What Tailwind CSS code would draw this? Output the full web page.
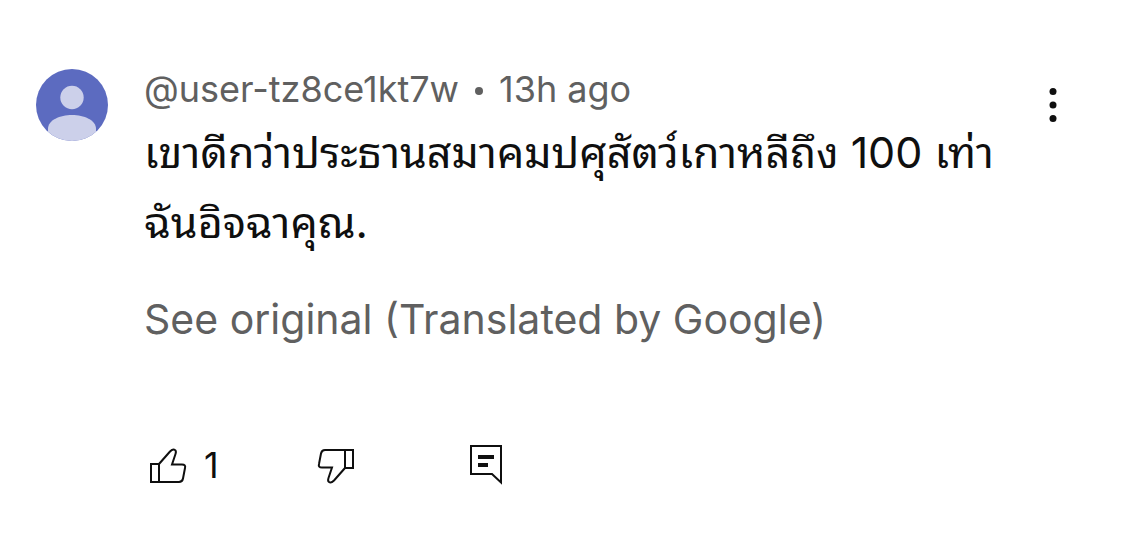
<!DOCTYPE html>
<html lang="th">

<head>
    <meta charset="UTF-8">
    <meta name="viewport" content="width=device-width, initial-scale=1.0">
    <title>Comment</title>
    <script src="https://cdn.jsdelivr.net/npm/@tailwindcss/browser@4"></script>
</head>

<body class="bg-white font-[Inter,'Noto_Sans_Thai_Looped',Thonburi,Loma,Garuda,Waree,sans-serif] text-[#0f0f0f]">

    <article class="flex items-start pl-9 pr-12 pt-[69px]">
        <!-- Avatar -->
        <svg class="size-[72px] shrink-0 rounded-full" viewBox="0 0 72 72" role="img" aria-label="User avatar">
            <rect width="72" height="72" fill="#5c6bc0" />
            <circle cx="36" cy="28.500" r="11.700" fill="#ccd0ea" />
            <path d="M12 72V60C12 51 24 46 36 46S60 51 60 60V72Z" fill="#ccd0ea" />
        </svg>

        <div class="ml-9 min-w-0 flex-1">
            <header class="flex items-center gap-4 text-[36px] leading-10 text-[#606060]">
                <a href="#">@user-tz8ce1kt7w</a>
                <span class="mt-1 size-2 rounded-full bg-[#606060]"></span>
                <time>13h ago</time>
            </header>
            <p class="mt-2 text-[43px] leading-[70px]">เขาดีกว่าประธานสมาคมปศุสัตว์เกาหลีถึง 100 เท่า<br>ฉันอิจฉาคุณ.</p>
            <button type="button" class="mt-9 block text-left text-[41px] leading-[52px] text-[#606060]">See original (Translated by Google)</button>

            <!-- Actions -->
            <div class="mt-[100px] flex items-center">
                <button type="button" class="ml-1 flex w-[168px] items-center gap-4 text-[36px] leading-10" aria-label="Like">
                    <svg class="size-10" viewBox="0 -1 40 40" fill="none" stroke="currentColor" stroke-width="2">
                        <path d="M3 18H11V36H3Z" />
                        <path d="M11 18L22 5.500Q25 2.500 27 4Q28.500 5 27.500 8L24 18.500H34Q38 18.500 37 22L35 32.500Q34.300 36 31 36H11" />
                    </svg>
                    <span>1</span>
                </button>
                <button type="button" class="w-[150px]" aria-label="Dislike">
                    <svg class="size-10" viewBox="0 -1 40 40" fill="none" stroke="currentColor" stroke-width="2">
                        <path d="M29 4H37V22H29Z" />
                        <path d="M29 22L18 34.500Q15 37.500 13 36Q11.500 35 12.500 32L16 21.500H6Q2 21.500 3 18L5 7.500Q5.700 4 9 4H29" />
                    </svg>
                </button>
                <button type="button" aria-label="Reply">
                    <svg class="size-10" viewBox="0 0 40 40" fill="none" stroke="currentColor" stroke-width="2">
                        <path d="M5 1H35V37.500L26 29H5Z" />
                        <path d="M12 12H28M12 20H22" stroke-width="4" />
                    </svg>
                </button>
            </div>
        </div>

        <button type="button" class="mt-4 h-10 w-12 shrink-0" aria-label="More options">
            <svg class="mx-auto h-10 w-2" viewBox="0 0 8 40" fill="currentColor">
                <circle cx="4" cy="6.500" r="3.500" />
                <circle cx="4" cy="20" r="3.500" />
                <circle cx="4" cy="33.500" r="3.500" />
            </svg>
        </button>
    </article>

</body>

</html>
